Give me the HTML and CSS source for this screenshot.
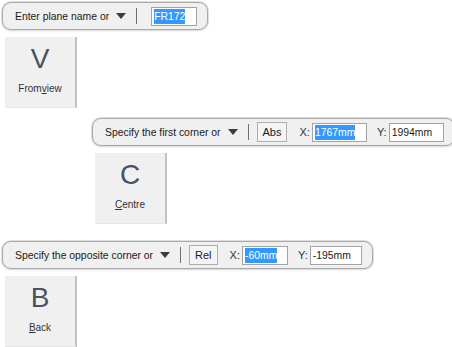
FILE: index.html
```html
<!DOCTYPE html>
<html lang="en">
<head>
    <meta charset="UTF-8">
    <title>Command prompts</title>
    <link rel="stylesheet" href="styles.css">
</head>
<body>
    <div class="group">
        <div class="prompt">
            <span class="prompt-text">Enter plane name or</span>
            <span class="caret"></span>
            <span class="sep"></span>
            <span class="field w46"><span class="sel">FR172</span></span>
        </div>
        <div class="tile">
            <div class="key">V</div>
            <div class="label">From<u>v</u>iew</div>
        </div>
    </div>

    <div class="group indent">
        <div class="prompt">
            <span class="prompt-text">Specify the first corner or</span>
            <span class="caret"></span>
            <span class="sep"></span>
            <span class="mode">Abs</span>
            <span class="axis">X:</span>
            <span class="field w55"><span class="sel">1767mm</span></span>
            <span class="axis">Y:</span>
            <span class="field w55">1994mm</span>
        </div>
        <div class="tile">
            <div class="key">C</div>
            <div class="label"><u>C</u>entre</div>
        </div>
    </div>

    <div class="group last">
        <div class="prompt">
            <span class="prompt-text">Specify the opposite corner or</span>
            <span class="caret"></span>
            <span class="sep"></span>
            <span class="mode">Rel</span>
            <span class="axis">X:</span>
            <span class="field w46"><span class="sel">-60mm</span></span>
            <span class="axis">Y:</span>
            <span class="field w52">-195mm</span>
        </div>
        <div class="tile">
            <div class="key">B</div>
            <div class="label"><u>B</u>ack</div>
        </div>
    </div>
</body>
</html>
```

FILE: styles.css
```css
* {
    margin: 0;
    padding: 0;
    box-sizing: border-box;
}

body {
    font-family: 'Liberation Sans', Arial, sans-serif;
    font-size: 10.4px;
    color: #1a1a1a;
    background: #fff;
    padding: 2px 0 0 2px;
}

.group {
    display: flex;
    flex-direction: column;
    align-items: flex-start;
}

.group.indent {
    margin: 10px 0 0 90px;
}

.group.last {
    margin-top: 17px;
}

.prompt {
    display: flex;
    align-items: center;
    flex-shrink: 0;
    white-space: nowrap;
    height: 28px;
    padding: 0 10px 0 12px;
    background: #f0f0f0;
    border: 1px solid #a9a9a9;
    border-radius: 9px;
    box-shadow: 0 0 0 1px #dedede, 0 1px 2px rgba(0, 0, 0, 0.15);
}

.prompt-text {
    margin-right: 7px;
}

.caret {
    flex-shrink: 0;
    width: 0;
    height: 0;
    border-left: 5.5px solid transparent;
    border-right: 5.5px solid transparent;
    border-top: 6px solid #3c3c3c;
}

.sep {
    flex-shrink: 0;
    width: 1px;
    height: 16px;
    background: #6e6e6e;
    margin: 0 8px 0 10px;
}

.mode {
    display: flex;
    align-items: center;
    height: 20px;
    padding: 0 5px;
    border: 1px solid #adadad;
    background: #f4f4f4;
    margin-right: 12px;
    font-size: 11px;
}

.axis {
    font-size: 11px;
    color: #333;
    margin-right: 2px;
}

.axis + .field + .axis {
    margin-left: 10px;
}

.field {
    display: flex;
    align-items: center;
    flex-shrink: 0;
    height: 19px;
    padding: 0 2px;
    background: #fff;
    border: 1px solid #a3a3a3;
}

.prompt-text + .caret + .sep + .field {
    margin-left: 6px;
}

.sel {
    background: #3399ff;
    color: #fff;
    padding: 2px 0;
}

.w46 { width: 46px; }
.w52 { width: 52px; }
.w55 { width: 55px; }

.tile {
    width: 72px;
    height: 71px;
    margin: 7px 0 0 3px;
    background: #f0f0f0;
    border-right: 2px solid #c2c2c2;
    border-bottom: 1px solid #e6e6e6;
    display: flex;
    flex-direction: column;
    align-items: center;
}

.key {
    font-size: 28px;
    line-height: 28px;
    margin-top: 8px;
    color: #4a5260;
}

.label {
    margin-top: 10px;
    font-size: 10px;
    color: #333;
}
```
